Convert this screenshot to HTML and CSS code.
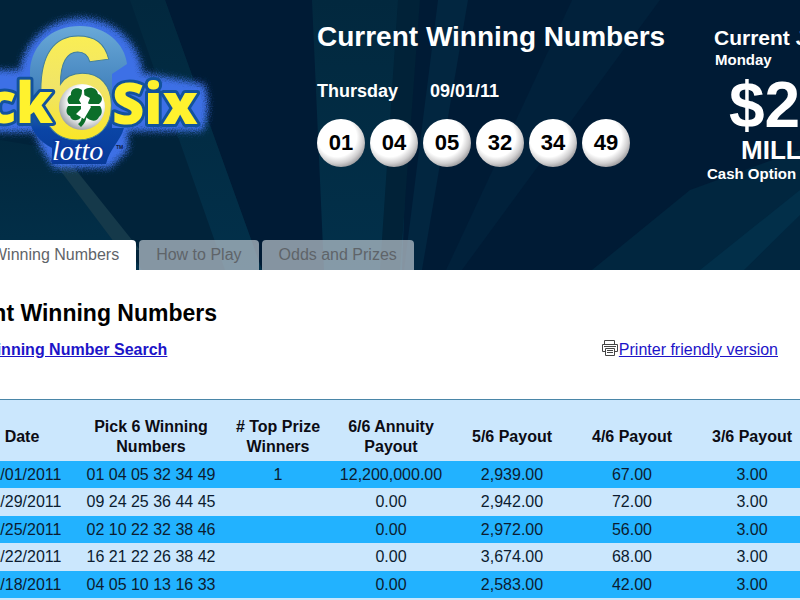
FILE: index.html
```
<!DOCTYPE html>
<html lang="en">
<head>
<meta charset="UTF-8">
<meta name="viewport" content="width=device-width, initial-scale=1.0">
<title>Pick Six Lotto</title>

<link rel="stylesheet" href="styles.css">

</head>
<body>

<header class="header">
  <svg class="rays" viewBox="0 0 800 270" preserveAspectRatio="none" aria-hidden="true">
    <defs>
      <linearGradient id="ray" x1="0" y1="0" x2="0" y2="1">
        <stop offset="0" stop-color="#02283e"/>
        <stop offset="1" stop-color="#02304a"/>
      </linearGradient>
    </defs>
    <polygon points="0,0 165,0 262,270 0,270" fill="#01233a"/>
    <polygon points="130,0 165,0 262,270 225,270" fill="url(#ray)"/>
    <polygon points="0,140 60,150 142,270 0,270" fill="url(#ray)"/>
    <polygon points="45,150 68,160 140,250 120,250" fill="#15394a"/>
    <polygon points="312,0 412,0 402,270 324,270" fill="url(#ray)"/>
    <polygon points="398,0 420,0 400,270 380,270" fill="#012238"/>
    <polygon points="438,0 468,0 422,270 404,270" fill="#022640"/>
    <polygon points="572,0 660,0 462,270 446,270" fill="#01213b"/>
    <polygon points="800,150 800,270 592,270 690,190" fill="#01263f"/>
    <polygon points="800,190 800,215 744,270 700,270" fill="#022f49"/>
  </svg>

  <div class="banner">
    <a href="#" class="logo" aria-label="Pick Six lotto">
      <svg width="220" height="190" viewBox="0 0 220 190">
        <defs>
          <linearGradient id="disc" x1="0" y1="0" x2="0" y2="1">
            <stop offset="0" stop-color="#69a9d8"/>
            <stop offset="0.45" stop-color="#4483bd"/>
            <stop offset="0.75" stop-color="#0a45a6"/>
            <stop offset="1" stop-color="#083a98"/>
          </linearGradient>
          <linearGradient id="six" x1="0" y1="0" x2="0" y2="1">
            <stop offset="0" stop-color="#fff34a"/>
            <stop offset="0.5" stop-color="#f0e468"/>
            <stop offset="1" stop-color="#ffe800"/>
          </linearGradient>
          <radialGradient id="pearl" cx="0.58" cy="0.4" r="0.62">
            <stop offset="0.6" stop-color="#ffffff"/>
            <stop offset="1" stop-color="#a0a4a8"/>
          </radialGradient>
          <filter id="glow" x="-20%" y="-20%" width="140%" height="140%">
            <feGaussianBlur stdDeviation="3"/>
            <feTurbulence type="fractalNoise" baseFrequency="0.8" numOctaves="1" result="noise"/>
            <feGaussianBlur in="SourceGraphic" stdDeviation="3" result="soft"/>
            <feDisplacementMap in="soft" in2="noise" scale="8" xChannelSelector="R" yChannelSelector="G"/>
          </filter>
        </defs>
        <g filter="url(#glow)" fill="#3d6fe6">
          <circle cx="81" cy="80" r="62"/>
          <path d="M-20 70H110L150 74L204 84Q212 106 203 131H128V150L110 168H54L42 150L34 132H-20Z"/>
        </g>
        <path d="M80 26C106 26 125 44 127 64L112 74V128H124C120 142 110 148 106 164H52V148C40 142 32 132 30 122V70C32 44 52 26 80 26Z" fill="url(#disc)"/>
        <text class="logo-six" x="76" y="139" text-anchor="middle" fill="url(#six)">6</text>
        <text class="logo-word" x="53" y="123" text-anchor="end">Pick</text>
        <text class="logo-word" x="112" y="124">Six</text>
        <circle cx="82" cy="107" r="23" fill="url(#pearl)"/>
        <g fill="#0b6e2a">
          <path d="M81 104H69C66 100 68 96 71 95C70 89 77 86 82 90Z"/>
          <path d="M85 104H99C104 100 102 95 98 94C97 87 89 86 84 90Z"/>
          <path d="M81 106H68C65 111 67 115 70 116C71 121 78 122 81 117Z"/>
          <path d="M86 106H100C103 110 102 115 99 117C97 122 90 122 85 116Z"/>
          <path d="M82 114L87 115C86 121 84 124 81 127L78 124C81 122 82 119 82 114Z"/>
        </g>
        <path d="M82 94L90 98L88 103L91 107L84 119L76 114L83 107L79 100Z" fill="#fff"/>
        <text class="logo-lotto" x="52" y="160">lotto</text>
        <text class="logo-tm" x="116" y="149">TM</text>
      </svg>
    </a>

    <div class="results">
      <h1>Current Winning Numbers</h1>
      <p class="draw-date"><span>Thursday</span> <span>09/01/11</span></p>
      <ul class="balls">
        <li>01</li>
        <li>04</li>
        <li>05</li>
        <li>32</li>
        <li>34</li>
        <li>49</li>
      </ul>
    </div>

    <div class="jackpot">
      <div class="jackpot-title">Current Jackpot</div>
      <div class="jackpot-day">Monday</div>
      <div class="jackpot-amount">$2</div>
      <div class="jackpot-unit">MILLION</div>
      <div class="jackpot-cash">Cash Option</div>
    </div>
  </div>

  <nav class="tabs">
    <a class="active" href="#">Winning Numbers</a>
    <a href="#">How to Play</a>
    <a href="#">Odds and Prizes</a>
  </nav>
</header>

<main class="page">
  <h2>Current Winning Numbers</h2>
  <div class="toolbar">
    <a class="search" href="#">Pick 6 Winning Number Search</a>
    <a class="print" href="#"><svg width="18" height="18" viewBox="0 0 18 18" fill="#fff" stroke="#444" aria-hidden="true">
      <path d="M3.500 5.500V1.500H13.500V5.500"/>
      <path d="M1.500 5.500H16.500V12.500H1.500Z"/>
      <path d="M3 7.500H15"/>
      <path d="M4.500 9.500H13.500V16.500H4.500Z"/>
      <path d="M6 11.500H12M6 13.500H12"/>
    </svg>Printer friendly version</a>
  </div>

  <div class="table-wrap">
    <table>
      <colgroup>
        <col class="col-date">
        <col class="col-numbers">
        <col class="col-winners">
        <col class="col-annuity">
        <col class="col-five">
        <col class="col-four">
        <col class="col-three">
      </colgroup>
      <thead>
        <tr>
          <th>Date</th>
          <th>Pick 6 Winning<br>Numbers</th>
          <th># Top Prize<br>Winners</th>
          <th>6/6 Annuity<br>Payout</th>
          <th>5/6 Payout</th>
          <th>4/6 Payout</th>
          <th>3/6 Payout</th>
        </tr>
      </thead>
      <tbody>
        <tr><td>09/01/2011</td><td>01 04 05 32 34 49</td><td>1</td><td>12,200,000.00</td><td>2,939.00</td><td>67.00</td><td>3.00</td></tr>
        <tr><td>08/29/2011</td><td>09 24 25 36 44 45</td><td></td><td>0.00</td><td>2,942.00</td><td>72.00</td><td>3.00</td></tr>
        <tr><td>08/25/2011</td><td>02 10 22 32 38 46</td><td></td><td>0.00</td><td>2,972.00</td><td>56.00</td><td>3.00</td></tr>
        <tr><td>08/22/2011</td><td>16 21 22 26 38 42</td><td></td><td>0.00</td><td>3,674.00</td><td>68.00</td><td>3.00</td></tr>
        <tr><td>08/18/2011</td><td>04 05 10 13 16 33</td><td></td><td>0.00</td><td>2,583.00</td><td>42.00</td><td>3.00</td></tr>
      </tbody>
    </table>
  </div>
</main>

</body>
</html>
```
FILE: styles.css
```
/* Global Styles */
body {
  font-family: "Liberation Sans", Arial, Helvetica, sans-serif;
  font-size: 16px;
  background-color: #fff;
  margin: 0;
  overflow-x: hidden;
}
h1, h2, p, ul {
  margin: 0;
  padding: 0;
}

/* Header */
.header {
  position: relative;
  overflow: hidden;
  background-color: #001b35;
  color: #fff;
  font-weight: bold;
}
.rays {
  position: absolute;
  top: 0;
  left: 0;
  width: 100%;
  height: 100%;
}
.banner {
  position: relative;
  display: grid;
  grid-template-columns: 317px 390px 1fr;
  min-height: 240px;
}
.logo svg {
  display: block;
}
.logo-six {
  font-size: 146px;
  font-weight: bold;
  stroke: #3f7d9c;
  stroke-width: 1px;
}
.logo-word {
  font-family: "Open Sans", sans-serif;
  font-size: 56px;
  font-weight: 800;
  fill: #fff22e;
  stroke: #12529c;
  stroke-width: 6px;
  stroke-linejoin: round;
  paint-order: stroke;
}
.logo-lotto {
  font-family: "Liberation Serif", serif;
  font-size: 28px;
  font-style: italic;
  font-weight: normal;
  fill: #fff;
  stroke: #0a3aa0;
  stroke-width: 4px;
  paint-order: stroke;
}
.logo-tm {
  font-size: 5px;
  fill: #0a1a40;
}
.results {
  padding-top: 21px;
}
.results h1 {
  font-size: 28px;
  line-height: 32px;
  margin-bottom: 28px;
}
.draw-date {
  display: flex;
  gap: 32px;
  font-size: 18px;
  line-height: 20px;
  margin-bottom: 18px;
}
.balls {
  display: flex;
  gap: 5px;
  list-style: none;
}
.balls li {
  width: 48px;
  height: 48px;
  border-radius: 50%;
  background: radial-gradient(circle at 42% 38%, #fff 48%, #d0cfd0 64%, #77767a 84%);
  color: #000;
  font-size: 22px;
  line-height: 48px;
  text-align: center;
}
.jackpot {
  padding-top: 26px;
  white-space: nowrap;
  min-width: 0;
}
.jackpot-title {
  padding-left: 7px;
  font-size: 21px;
  line-height: 24px;
}
.jackpot-day {
  padding-left: 8px;
  font-size: 15px;
  line-height: 20px;
  margin-bottom: 4px;
}
.jackpot-amount {
  padding-left: 22px;
  font-size: 64px;
  line-height: 62px;
}
.jackpot-unit {
  padding-left: 34px;
  font-size: 26px;
  line-height: 28px;
}
.jackpot-cash {
  font-size: 15px;
  line-height: 20px;
}

/* Tabs */
.tabs {
  position: relative;
  display: flex;
  gap: 3px;
  margin-left: -25px;
}
.tabs a {
  padding: 0 17px;
  line-height: 30px;
  font-weight: normal;
  color: #5f6469;
  text-decoration: none;
  border-radius: 4px 4px 0 0;
  background-color: rgba(190, 200, 208, 0.7);
}
.tabs a.active {
  background-color: #fff;
}

/* Content */
.page {
  margin: 0 -21px 0 -69px;
  padding-top: 29px;
}
.page h2 {
  font-size: 23px;
  line-height: 28px;
  margin-bottom: 12px;
  color: #000;
}
.toolbar {
  display: flex;
  align-items: baseline;
  justify-content: space-between;
  line-height: 18px;
  padding-right: 43px;
  margin-bottom: 40px;
}
.toolbar a {
  color: #1d14c8;
}
.search {
  font-weight: bold;
}
.print svg {
  vertical-align: -2px;
}

/* Results table */
.table-wrap {
  padding: 0 0 28px 28px;
  background-color: #cbe7fd;
  border-top: 1px solid #4a86a8;
}
table {
  width: 100%;
  table-layout: fixed;
  border-collapse: collapse;
}
.col-date { width: 126px; }
.col-numbers { width: 132px; }
.col-winners { width: 122px; }
.col-annuity { width: 104px; }
.col-five { width: 138px; }
.col-four { width: 102px; }
.col-three { width: 138px; }
th {
  padding: 17px 0 4px;
  line-height: 20px;
  color: #0c0c14;
}
td {
  height: 28px;
  padding: 0;
  text-align: center;
  color: #0c1c30;
}
tbody tr:nth-child(odd) td {
  height: 27px;
  background-color: #22b2ff;
}
```
